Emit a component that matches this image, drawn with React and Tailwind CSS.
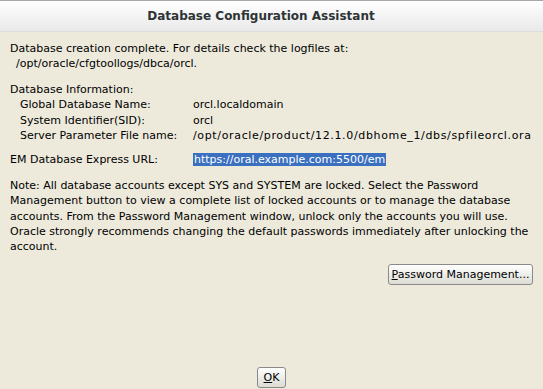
export default function App() {
  const body = { fontFamily: '"DejaVu Sans", sans-serif' };
  return (
    <div className="w-[543px] h-[389px] overflow-hidden flex flex-col bg-[#edeadc] border-t border-[#a8a8a8]" style={body}>
      <div className="h-[31px] shrink-0 flex items-center justify-center pr-[21px] bg-gradient-to-b from-white to-[#e9e9e9] border-b border-[#dcdcdc]">
        <span className="text-[12px] font-bold text-[#2e3436]">Database Configuration Assistant</span>
      </div>
      <div className="flex-1 flex flex-col px-[10px] pt-[9px] text-[11px] leading-[15.4px] text-black">
        <p>Database creation complete. For details check the logfiles at:</p>
        <p className="pl-[6px]">/opt/oracle/cfgtoollogs/dbca/orcl.</p>
        <p className="mt-[10px]">Database Information:</p>
        <div className="grid grid-cols-[173px_1fr] pl-[10px]">
          <span>Global Database Name:</span>
          <span>orcl.localdomain</span>
          <span>System Identifier(SID):</span>
          <span>orcl</span>
          <span>Server Parameter File name:</span>
          <span className="tracking-[0.65px]">/opt/oracle/product/12.1.0/dbhome_1/dbs/spfileorcl.ora</span>
        </div>
        <div className="grid grid-cols-[183px_1fr] mt-[9px] items-center">
          <span>EM Database Express URL:</span>
          <span>
            <span className="bg-[#3b6fc0] text-white px-[1px]">https://oral.example.com:5500/em</span>
          </span>
        </div>
        <p className="mt-[10px]">
          Note: All database accounts except SYS and SYSTEM are locked. Select the Password
          Management button to view a complete list of locked accounts or to manage the database
          accounts. From the Password Management window, unlock only the accounts you will use.
          Oracle strongly recommends changing the default passwords immediately after unlocking
          the account.
        </p>
        <div className="flex justify-end mt-[9px]">
          <button className="h-[21px] w-[145px] rounded-[3px] border border-[#8a8a8a] bg-gradient-to-b from-white to-[#dcdcd4] text-[11px]">
            <span className="underline">P</span>assword Management...
          </button>
        </div>
        <div className="flex-1" />
        <div className="flex justify-center pb-[1px]">
          <button className="h-[21px] w-[29px] rounded-[3px] border border-[#8a8a8a] bg-gradient-to-b from-white to-[#dcdcd4] text-[11px]">
            <span className="underline">O</span>K
          </button>
        </div>
      </div>
    </div>
  );
}
